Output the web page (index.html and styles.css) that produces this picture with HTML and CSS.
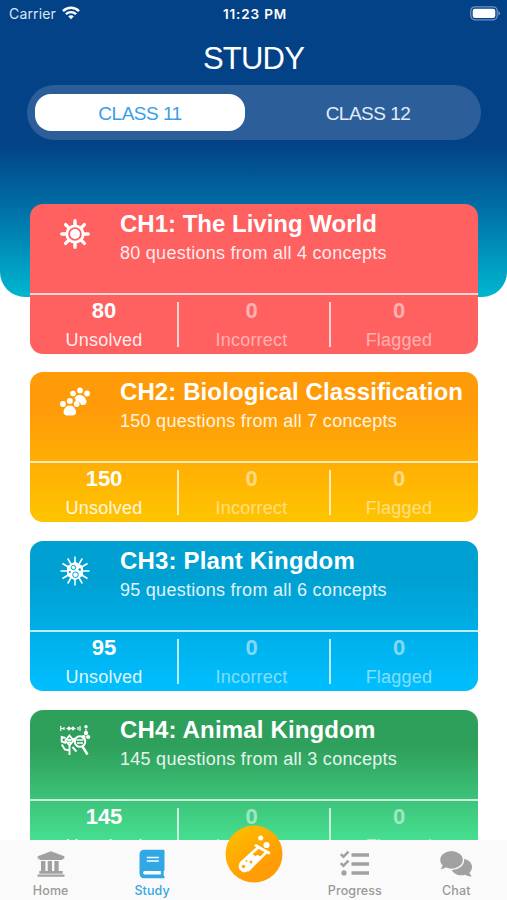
FILE: index.html
```html
<!DOCTYPE html>
<html lang="en">
<head>
<meta charset="utf-8">
<title>Study</title>
<link rel="stylesheet" href="styles.css">
</head>
<body>
<div class="app">
  <header class="hero">
    <div class="status">
      <div class="carrier"><span>Carrier</span>
        <svg width="18" height="14" viewBox="0 0 18 14" fill="none" stroke="#fff" stroke-width="2.4"><path d="M1 5.1C5.5.6 12.500.6 17 5.100M3.900 8.200c2.900-2.800 7.300-2.800 10.200 0"/><path d="M6.200 10.300c1.600-1.400 4-1.400 5.600 0L9 13.200z" fill="#fff" stroke="none"/></svg>
      </div>
      <span class="time">11:23 PM</span>
      <svg class="battery" width="31" height="15" viewBox="0 0 31 15"><rect x=".8" y=".8" width="26.400" height="13" rx="4" fill="none" stroke="#6f94c2" stroke-width="1.300"/><rect x="2.700" y="2.700" width="22.600" height="9.200" rx="2.200" fill="#fff"/><path d="M28.500 5q3 2.300 0 4.600z" fill="#7f9fc7"/></svg>
    </div>
    <h1>STUDY</h1>
    <nav class="segment"><span class="seg active">CLASS 11</span><span class="seg">CLASS 12</span></nav>
  </header>

  <main class="cards">
    <section class="card red">
      <div class="top">
        <svg class="icon" viewBox="0 0 30 30" fill="none" stroke="#fff" stroke-linecap="round"><circle cx="15" cy="15" r="8.200" stroke-width="2.800"/><circle cx="15" cy="15" r="4.900" fill="#fff" stroke="none"/><path stroke-width="3.400" d="M15 1.800V6M15 24v4.200M1.800 15H6M24 15h4.200M5.600 5.600l3 3M21.400 21.400l3 3M5.600 24.400l3-3M21.400 8.600l3-3"/></svg>
        <div><h2>CH1: The Living World</h2><p>80 questions from all 4 concepts</p></div>
      </div>
      <div class="stats"><div class="stat on"><b>80</b><span>Unsolved</span></div><div class="stat"><b>0</b><span>Incorrect</span></div><div class="stat"><b>0</b><span>Flagged</span></div></div>
    </section>
    <section class="card orange">
      <div class="top">
        <svg class="icon" viewBox="0 0 30 30" fill="#fff"><g><circle cx="13" cy="6.500" r="2.800"/><circle cx="20" cy="3.500" r="2.900"/><circle cx="27" cy="6.500" r="2.900"/><path d="M14.500 11.500C16 8 18 8 20 8c4 0 6.500 4 6.500 7 0 3-2.500 3-5.500 3-.500-3-3-4.500-5.500-4 .500-1.500 0-2.300-1-2.500z"/></g><g><circle cx="2.900" cy="17" r="2.900"/><circle cx="9.800" cy="14" r="3"/><circle cx="16.700" cy="17" r="2.900"/><path d="M9.800 18.500c3.700 0 6.200 3.500 6.200 6.500 0 3.700-3 3.500-6.200 3.500s-6.200.2-6.200-3.500c0-3 2.500-6.500 6.200-6.500z"/></g></svg>
        <div><h2 class="wide">CH2: Biological Classification</h2><p>150 questions from all 7 concepts</p></div>
      </div>
      <div class="stats"><div class="stat on"><b>150</b><span>Unsolved</span></div><div class="stat"><b>0</b><span>Incorrect</span></div><div class="stat"><b>0</b><span>Flagged</span></div></div>
    </section>
    <section class="card blue">
      <div class="top">
        <svg class="icon" viewBox="0 0 30 30" fill="none" stroke="#fff"><path stroke-width="1.500" d="M15 .5v29M.5 15h29M7.700 2.500l14.600 25M22.300 2.500l-14.600 25M2.500 7.500l25 15M27.500 7.500l-25 15"/><path fill="#fff" stroke="none" d="M15 5.500l8 4.700v9.600l-8 4.700-8-4.700v-9.600z"/><g stroke="#00a0d2" stroke-width="1"><circle cx="13.500" cy="11.500" r="2.200"/><circle cx="15.500" cy="18.800" r="2.800"/></g><g fill="#00a0d2" stroke="none"><circle cx="19.700" cy="13.500" r="1.300"/><circle cx="9.800" cy="16" r="1.100"/></g></svg>
        <div><h2 class="wider">CH3: Plant Kingdom</h2><p>95 questions from all 6 concepts</p></div>
      </div>
      <div class="stats"><div class="stat on"><b>95</b><span>Unsolved</span></div><div class="stat"><b>0</b><span>Incorrect</span></div><div class="stat"><b>0</b><span>Flagged</span></div></div>
    </section>
    <section class="card green">
      <div class="top">
        <svg class="icon" viewBox="0 0 30 30" fill="none" stroke="#fff" stroke-width="1.200"><path d="M.8 1v5M.8 3.500h3M4 2v3M6.500 3.500h9M18 2v3M20 1v5"/><path fill="#fff" d="M7.500 3.500l1.500-1.500 1.500 1.500L9 5zM11.500 3.500L13 2l1.500 1.500L13 5z"/><path d="M26 1v2M26 4v3"/><g fill="#fff" stroke="none"><circle cx="26" cy="1.800" r="1.700"/><circle cx="26" cy="8" r="2.200"/><circle cx="23.500" cy="12" r="2.100"/><circle cx="28.200" cy="12" r="2.100"/></g><path stroke-width="1.900" d="M9.500 10.500l4 5-4 5-4-5zM9.500 20.500V30M5.500 13L1.700 12v4.500L6 18M1.800 19.500l3 5 4.500 1M12.500 22l4 4.500M7.500 15h4M8 17.500h3M14 13l1 4"/><circle cx="20" cy="16.500" r="5.300" stroke-width="2"/><path stroke-width="1.600" d="M16.500 15h7M17 18h6"/><path stroke-width="2.500" d="M22.500 21.500l5 8"/></svg>
        <div><h2 class="wider">CH4: Animal Kingdom</h2><p>145 questions from all 3 concepts</p></div>
      </div>
      <div class="stats"><div class="stat on"><b>145</b><span>Unsolved</span></div><div class="stat"><b>0</b><span>Incorrect</span></div><div class="stat"><b>0</b><span>Flagged</span></div></div>
    </section>
  </main>

  <footer class="tabs">
    <div class="tab"><svg viewBox="0 0 30 30" fill="#a1a1a1"><path d="M15 2.200L28.300 7.200v2.500H26.500v1.300h-23V9.700H1.700V7.200zM5 12h4.400v10h2.300v-10h4.300v10h2.300v-10h4.400v10H25v2.700H5zM3.300 22h23.400v2.700H3.300zM1.500 25.600h27v2.200h-27z"/></svg><span>Home</span></div>
    <div class="tab current"><svg viewBox="0 0 30 30"><path fill="#31a8e5" d="M7.500.7h19q1 0 1 1v19q0 1-.8 1.400v5h.8V29.200H7.500q-5 0-5-5V5.700q0-5 5-5z"/><path stroke="#fff" stroke-width="1.500" d="M9.800 8.500h12M9.800 12h12"/><path fill="#fff" d="M8 21.900h15.800v3.500H8q-2 0-2-1.750T8 21.900z"/></svg><span>Study</span></div>
    <div class="tab middle"></div>
    <div class="tab"><svg viewBox="0 0 30 30" fill="none" stroke="#a1a1a1" stroke-width="2.500"><path d="M.8 5.200l2.700 2.500 5-5M.8 14.200l2.700 2.500 5-5"/><path stroke-width="3.500" d="M11.500 6.100h17.500M11.500 15h17.500M11.500 23.900h17.500"/><circle cx="4" cy="23.900" r="2.600" fill="#a1a1a1" stroke="none"/></svg><span>Progress</span></div>
    <div class="tab"><svg class="chat" viewBox="0 0 34 30"><path fill="#a1a1a1" d="M21 10c6-1.500 12 2.500 12 8 0 2.200-1 4.200-2.500 5.700q.7 2.200 2.300 3.600c-2.500.3-4.600-.3-6.500-1.600C20 27.600 14 25 12.500 20z"/><path fill="#a1a1a1" stroke="#fafafa" stroke-width="1.400" d="M12.500 1.400c6.500 0 12 4.200 12 9.500s-5.500 9.500-12 9.500c-2 0-3.900-.4-5.500-1.200-2 1.300-4.300 1.900-7 1.600 1.400-1.200 2.400-2.700 2.800-4.300C1.300 14.900.5 13 .5 10.900c0-5.300 5.500-9.500 12-9.500z"/></svg><span>Chat</span></div>
    <svg class="lab" viewBox="0 0 58 58"><defs><linearGradient id="g" x1="0" y1="0" x2=".7" y2="1"><stop offset=".2" stop-color="#ffb800"/><stop offset=".8" stop-color="#ff9c06"/></linearGradient></defs><circle cx="29" cy="29" r="28.500" fill="url(#g)"/><g fill="none" stroke="#fff" stroke-linecap="round" stroke-linejoin="round"><path fill="#fff" stroke-width="1" d="M26 28.500l4 3 3-1 3.500 2.500L23 45.500q-4 3-7.500-.5-3-4 0-7.500z"/><path stroke-width="2.600" d="M30.800 20.500L44 28M33 22.500L16 38M40.500 28L23.500 45"/></g><g fill="#ffa807"><circle cx="18.500" cy="41.500" r="1.700"/><circle cx="26" cy="37" r="1.500"/><circle cx="21.500" cy="36" r=".9"/></g><circle cx="35.700" cy="13" r="2.500" fill="#fff"/><circle cx="41.500" cy="20" r="3.100" fill="#fff"/></svg>
  </footer>
</div>
</body>
</html>
```
FILE: styles.css
```css
* { box-sizing: border-box; }
body { margin: 0; background: #fff; font-family: "Liberation Sans", Arial, sans-serif; }
.app { width: 507px; height: 900px; overflow: hidden; display: flex; flex-direction: column; }
.hero { height: 297px; flex: none; border-radius: 0 0 25px 25px; color: #fff; background: linear-gradient(#034287 0, #034287 145px, #0070a7 209px, #00b6d0 297px); }
.status { height: 28px; padding: 0 6px 0 9px; display: grid; grid-template-columns: 1fr auto 1fr; align-items: center; font: 14px Inter, sans-serif; }
.carrier { display: flex; align-items: center; gap: 6px; color: #dce6f2; letter-spacing: .15px; margin-top: -2px; }
.time { font-weight: 600; font-size: 13.500px; letter-spacing: .85px; }
.battery { justify-self: end; margin-top: -2px; }
h1 { margin: 12px 0 0; height: 37px; line-height: 38px; text-align: center; font-size: 31px; font-weight: 400; letter-spacing: -.8px; }
.segment { width: 454px; height: 55px; margin: 8px 0 0 27px; padding: 9px 8px; border-radius: 28px; background: #2c5f9a; display: flex; gap: 18px; }
.seg { width: 210px; height: 37px; line-height: 39px; border-radius: 16px; text-align: center; font-size: 19px; letter-spacing: -.5px; color: #e3ecf6; }
.seg.active { background: #fff; color: #3a9de6; }
.cards { flex: 1; min-height: 0; margin: -93.500px 29px 0 30px; display: flex; flex-direction: column; gap: 18.700px; overflow: hidden; }
.card { height: 150px; flex: none; border-radius: 13px; color: #fff; }
.red { background: #ff6060; }
.orange { background: linear-gradient(#ff9b08 25%, #ffc400); }
.blue { background: linear-gradient(#00a0d2 25%, #00bfff); }
.green { background: linear-gradient(#2fa05c 25%, #49e596 93%); }
.top { height: 91px; border-bottom: 2px solid rgba(255,255,255,.75); display: flex; gap: 30px; padding-left: 30px; }
.icon { width: 30px; height: 30px; margin-top: 15px; flex: none; overflow: visible; }
h2 { margin: 5px 0 0; font-size: 24px; line-height: 30px; height: 30px; white-space: nowrap; }
h2.wide { letter-spacing: .1px; }
h2.wider { letter-spacing: .16px; }
.top p { margin: 3px 0 0; font-size: 18px; line-height: 23px; letter-spacing: .27px; opacity: .88; white-space: nowrap; }
.stats { position: relative; display: flex; height: 59px; }
.stats::before, .stats::after { content: ""; position: absolute; top: 7px; width: 2px; height: 45px; background: rgba(255,255,255,.72); }
.stats::before { left: 147px; }
.stats::after { left: 299px; }
.stat { width: 150px; padding-right: 5px; text-align: center; display: flex; flex-direction: column; opacity: .5; }
.stat b { font-size: 22px; line-height: 26px; padding-top: 3px; }
.stat span { font-size: 18px; line-height: 22px; padding-top: 5px; letter-spacing: .24px; }
.stat.on { width: 148px; padding-right: 0; opacity: 1; }
.stat.on span { opacity: .88; }
.stat:last-child { width: 136px; padding-right: 0; }
.stat + .stat { margin-left: 1px; }
.stat:last-child { margin-left: 2px; }
.tabs { position: relative; height: 60px; flex: none; background: #fafafa; display: grid; grid-template-columns: repeat(5, 1fr); color: #999; font: 500 12.500px Inter, sans-serif; }
.tab { display: flex; flex-direction: column; align-items: center; padding-top: 9px; letter-spacing: .1px; }
.tab svg { width: 30px; height: 30px; }
.tab .chat { width: 34px; }
.tab span { line-height: 16px; margin-top: 4px; }
.current { color: #31a8e5; }
.lab { position: absolute; left: 225px; top: -15px; width: 58px; height: 58px; }
```
